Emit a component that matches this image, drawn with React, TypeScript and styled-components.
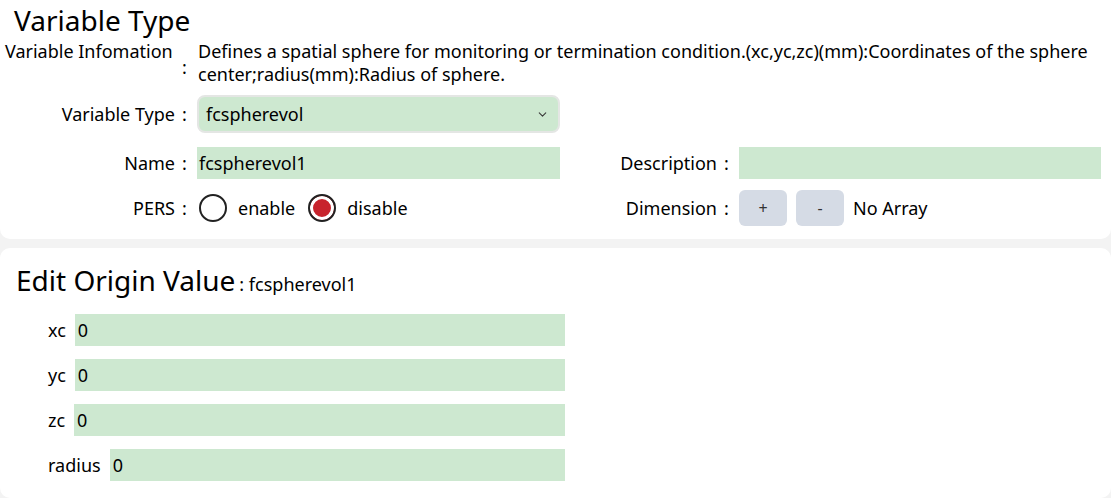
import styled, { createGlobalStyle } from 'styled-components';
import { ChevronDown } from 'lucide-react';

const GlobalStyle = createGlobalStyle`
    body {
        margin: 0;
        background: #f3f3f3;
        font-family: "Noto Sans", "Open Sans", sans-serif;
        color: #000;
    }
`;

const fields = [
    { name: 'xc', value: '0' },
    { name: 'yc', value: '0' },
    { name: 'zc', value: '0' },
    { name: 'radius', value: '0' },
];

const App = () => {
    return (<Page>
        <GlobalStyle />
        <TopCard>
            <Title>Variable Type</Title>
            <FormRow top={0}>
                <InfoLabel>Variable Infomation</InfoLabel>
                <InfoColon>:</InfoColon>
                <InfoText>
                    Defines a spatial sphere for monitoring or termination condition.(xc,yc,zc)(mm):Coordinates of the sphere center;radius(mm):Radius of sphere.
                </InfoText>
            </FormRow>

            <FormRow top={9}>
                <Label>Variable Type</Label>
                <Colon>:</Colon>
                <Select>
                    <span>fcspherevol</span>
                    <ChevronDown size={13} strokeWidth={2} color="#3a3a3a" />
                </Select>
            </FormRow>

            <FormRow top={14}>
                <Label>Name</Label>
                <Colon>:</Colon>
                <Input>fcspherevol1</Input>
                <Label>Description</Label>
                <Colon>:</Colon>
                <Input />
            </FormRow>

            <FormRow top={11}>
                <Label>PERS</Label>
                <Colon>:</Colon>
                <Inline>
                    <Radio checked={false} />
                    <OptionText>enable</OptionText>
                    <Radio checked={true} />
                    <OptionText>disable</OptionText>
                </Inline>
                <Label>Dimension</Label>
                <Colon>:</Colon>
                <Inline>
                    <DimButton>+</DimButton>
                    <DimButton>-</DimButton>
                    <OptionText>No Array</OptionText>
                </Inline>
            </FormRow>
        </TopCard>
        <BottomCard>
            <Header>
                <Title>Edit Origin Value</Title>
                <SubTitle>: fcspherevol1</SubTitle>
            </Header>
            <ValueList>
                {fields.map((f) => (
                    <ValueRow key={f.name}>
                        <ValueLabel>{f.name}</ValueLabel>
                        <ValueInput>{f.value}</ValueInput>
                    </ValueRow>
                ))}
            </ValueList>
        </BottomCard>
    </Page>);
};

const Page = styled.div`
    display: flex;
    flex-direction: column;
    gap: 9px;
    width: 1111px;
    height: 498px;
    overflow: hidden;
`;

const Card = styled.div`
    background: #fff;
    border-radius: 10px;
    padding: 12px 0 12px 5px;
`;

const TopCard = styled(Card)`
    border-top-left-radius: 0;
    border-top-right-radius: 0;
    padding: 0 0 13px 5px;
`;

const BottomCard = styled(Card)`
    flex: 1;
`;

const Title = styled.div`
    font-size: 28px;
    line-height: 40px;
    margin-left: 9px;
`;

const FormRow = styled.div<{ top: number }>`
    display: grid;
    grid-template-columns: 170px 22px 363px 157px 22px 362px;
    align-items: center;
    margin-top: ${props => props.top}px;
    font-size: 18px;
`;

const Label = styled.div`
    text-align: right;
    white-space: nowrap;
`;

const Colon = styled.div`
    padding-left: 7px;
`;

const InfoLabel = styled.div`
    align-self: start;
    line-height: 23px;
    white-space: nowrap;
`;

const InfoColon = styled(Colon)`
    padding-top: 8px;
`;

const InfoText = styled.div`
    grid-column: 3 / 7;
    line-height: 23px;
    padding-left: 1px;
`;

const Select = styled.div`
    height: 38px;
    box-sizing: border-box;
    border: 2px solid #e4e6e4;
    border-radius: 8px;
    background: #cde8d0;
    display: flex;
    align-items: center;
    justify-content: space-between;
    padding: 0 9px 0 7px;
`;

const Input = styled.div`
    height: 32px;
    line-height: 32px;
    background: #cde8d0;
    padding-left: 2px;
    box-sizing: border-box;
    white-space: nowrap;
`;

const Inline = styled.div`
    display: flex;
    align-items: center;
    gap: 11px;
    height: 36px;
`;

const Radio = styled.span<{ checked: boolean }>`
    width: 28px;
    height: 28px;
    box-sizing: border-box;
    border-radius: 50%;
    border: 2px solid #222;
    background: ${props => props.checked ? '#c8232c' : '#fff'};
    box-shadow: ${props => props.checked ? 'inset 0 0 0 3px #fff' : 'none'};
    margin-left: 2px;
`;

const OptionText = styled.span`
    font-size: 18px;
`;

const DimButton = styled.div`
    width: 48px;
    height: 36px;
    border-radius: 6px;
    background: #d5dbe5;
    display: flex;
    align-items: center;
    justify-content: center;
    font-size: 16px;
    color: #333;
    margin-right: -2px;
`;

const Header = styled.div`
    display: flex;
    align-items: baseline;
    margin-left: 2px;
    gap: 4px;
    height: 38px;
`;

const SubTitle = styled.span`
    font-size: 18px;
`;

const ValueList = styled.div`
    display: flex;
    flex-direction: column;
    gap: 13px;
    width: 517px;
    margin: 16px 0 0 43px;
    font-size: 18px;
`;

const ValueRow = styled.div`
    display: flex;
    align-items: center;
    gap: 9px;
`;

const ValueLabel = styled.span`
    white-space: nowrap;
`;

const ValueInput = styled(Input)`
    flex: 1;
    padding-left: 3px;
`;

export default App
